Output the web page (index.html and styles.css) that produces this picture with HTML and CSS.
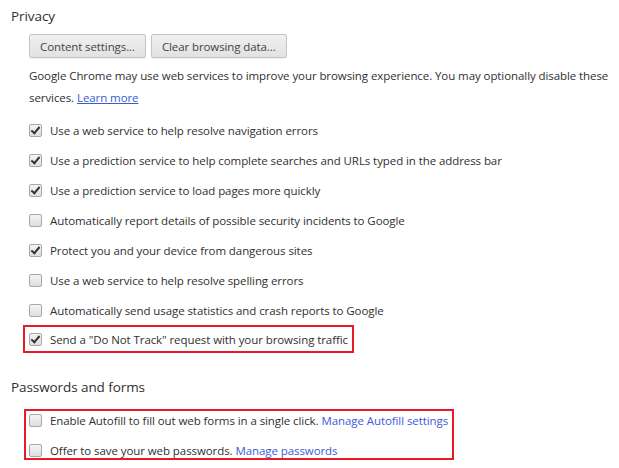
FILE: index.html
```html
<!DOCTYPE html>
<html>
<head>
<meta charset="utf-8">
<link rel="stylesheet" href="styles.css">
</head>
<body>
<section class="section">
  <h3 class="heading">Privacy</h3>
  <div class="indent">
    <div class="buttons">
      <button class="btn">Content settings...</button>
      <button class="btn">Clear browsing data...</button>
    </div>
    <p class="desc">Google Chrome may use web services to improve your browsing experience. You may optionally disable these services. <a class="link under" href="#">Learn more</a></p>
    <div class="list">
      <label class="row"><span class="cb checked"></span><span>Use a web service to help resolve navigation errors</span></label>
      <label class="row"><span class="cb checked"></span><span>Use a prediction service to help complete searches and URLs typed in the address bar</span></label>
      <label class="row"><span class="cb checked"></span><span>Use a prediction service to load pages more quickly</span></label>
      <label class="row"><span class="cb"></span><span>Automatically report details of possible security incidents to Google</span></label>
      <label class="row"><span class="cb checked"></span><span>Protect you and your device from dangerous sites</span></label>
      <label class="row"><span class="cb"></span><span>Use a web service to help resolve spelling errors</span></label>
      <label class="row"><span class="cb"></span><span>Automatically send usage statistics and crash reports to Google</span></label>
      <div class="hl hl1">
        <label class="row"><span class="cb checked"></span><span>Send a "Do Not Track" request with your browsing traffic</span></label>
      </div>
    </div>
  </div>
</section>
<section class="section second">
  <h3 class="heading">Passwords and forms</h3>
  <div class="indent">
    <div class="hl hl2">
      <label class="row"><span class="cb"></span><span>Enable Autofill to fill out web forms in a single click. <a class="link" href="#">Manage Autofill settings</a></span></label>
      <label class="row"><span class="cb"></span><span>Offer to save your web passwords. <a class="link" href="#">Manage passwords</a></span></label>
    </div>
  </div>
</section>
</body>
</html>
```
FILE: styles.css
```css
html, body {
  margin: 0;
  padding: 0;
  background: #fff;
}
body {
  font-family: "Open Sans", "Noto Sans", sans-serif;
  font-size: 11.5px;
  letter-spacing: -0.08px;
  color: #303030;
  padding: 5px 0 0 11px;
}
.heading {
  margin: 0;
  font-size: 13.5px;
  font-weight: normal;
  color: #303030;
  line-height: 22px;
}
.indent {
  padding-left: 18px;
}
.buttons {
  display: flex;
  gap: 5px;
  margin-top: 7px;
}
.btn {
  font-family: inherit;
  font-size: 11.5px;
  letter-spacing: -0.1px;
  color: #444;
  height: 24px;
  padding: 0 10px;
  border: 1px solid #c4c4c4;
  border-radius: 2px;
  background: linear-gradient(#f0f0f0, #e2e2e2);
  box-shadow: 0 1px 0 rgba(0,0,0,0.06);
}
.desc {
  margin: 7px 0 0;
  line-height: 22px;
  width: 590px;
}
.link {
  color: #3b5bd6;
  text-decoration: none;
}
.link.under {
  text-decoration: underline;
}
.list {
  margin-top: 6px;
  display: flex;
  flex-direction: column;
}
.row {
  display: flex;
  align-items: center;
  gap: 8px;
  height: 30px;
}
.cb {
  width: 11px;
  height: 11px;
  border: 1px solid #a8a8a8;
  border-radius: 2px;
  background: linear-gradient(#f4f4f4, #dedede);
  flex: none;
  position: relative;
}
.cb.checked::after {
  content: "";
  position: absolute;
  left: 3px;
  top: 0px;
  width: 3px;
  height: 7px;
  border: solid #333;
  border-width: 0 2px 2px 0;
  transform: rotate(40deg);
}
.hl {
  border: 2px solid #e81a24;
  align-self: flex-start;
}
.hl1 {
  margin-left: -6px;
  padding: 0 4px 0 4px;
}
.hl1 .row {
  height: 24px;
}
.second {
  margin-top: 23px;
}
.hl2 {
  display: inline-flex;
  flex-direction: column;
  gap: 14px;
  margin-left: -5px;
  margin-top: 11px;
  padding: 1px 4px 0 3px;
}
.hl2 .row {
  height: 16px;
}
```
